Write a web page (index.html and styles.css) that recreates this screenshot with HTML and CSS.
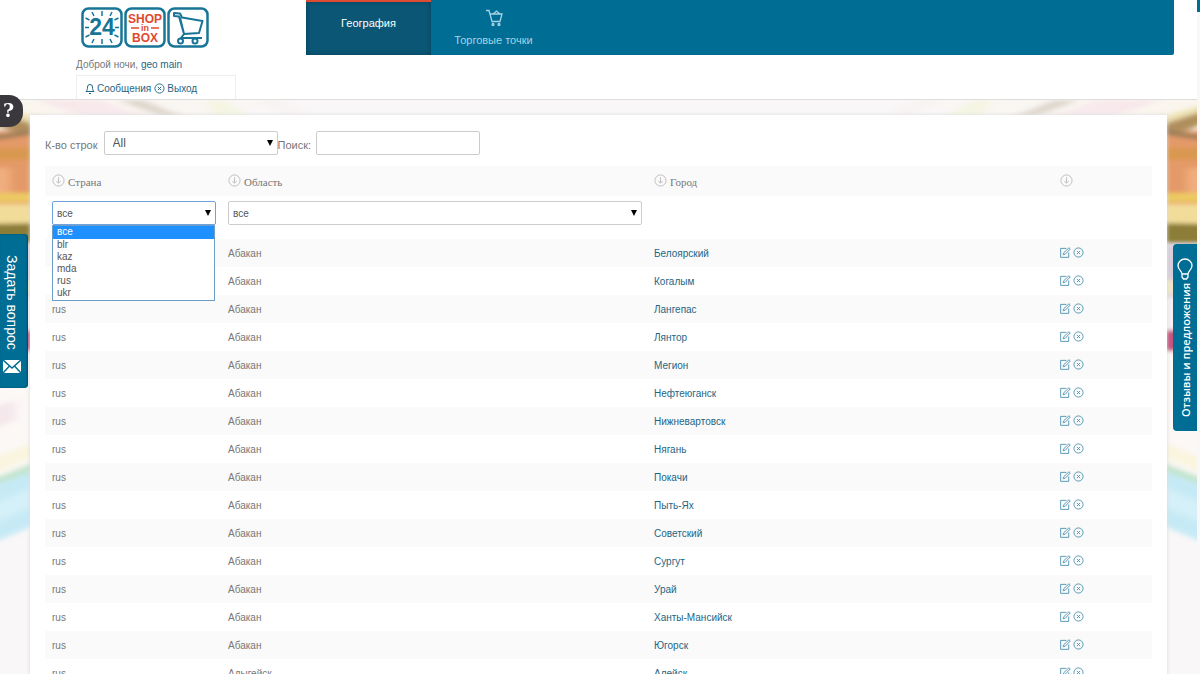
FILE: index.html
```
<!DOCTYPE html>
<html lang="ru">
<head>
<meta charset="utf-8">
<title>География</title>
<link rel="stylesheet" href="styles.css">
</head>
<body>
<svg class="defs" aria-hidden="true">
  <symbol id="down" viewBox="0 0 14 14"><g fill="none" stroke="currentColor"><circle cx="7" cy="7" r="6"/><path d="M7 3.500v6M4.800 7.500L7 10l2.200-2.500"/></g></symbol>
  <symbol id="edit" viewBox="0 0 12 12"><g fill="none" stroke="currentColor"><path d="M7 1.500H.7v9.800h8.800V6"/><path d="M3.500 8.500l.7-2.300L9.800.8l1.400 1.300L5.800 7.800z"/></g></symbol>
  <symbol id="close" viewBox="0 0 12 12"><g fill="none" stroke="currentColor"><circle cx="6" cy="6" r="5"/><path d="M4.200 4.200l3.600 3.600M7.800 4.200L4.200 7.800"/></g></symbol>
  <linearGradient id="haze"><stop offset="0" stop-color="#f9f7f8" stop-opacity="0.300"/><stop offset="1" stop-color="#f9f7f8"/></linearGradient>
  <symbol id="scene" viewBox="0 0 360 575" preserveAspectRatio="none">
    <g filter="url(#soft)">
      <path fill="#fbf4e8" d="M-10-10h330L230 16H-10z"/>
      <path fill="#f7dce2" d="M35 0h65l50 18H90z"/>
      <path fill="#b9a98f" d="M118 0h26l44 18h-24z"/>
      <path fill="#e9f0a8" d="M205 0h20l30 18h-40z"/>
      <path fill="#f5e0dc" d="M255 0h30l35 18h-32z"/>
    </g>
    <path fill="url(#haze)" d="M0 0h360v18H0z"/>
    <g filter="url(#soft)">
      <path fill="#efe2b4" d="M-10 4l50 14v20L-10 24z"/>
      <path fill="#b08e5c" d="M-10 10l50 16v18L-10 22z"/>
      <path fill="#e49a68" d="M-10 30l60 4v74h-60z"/>
      <path fill="#9a7d58" d="M-10 36l60-9v5l-60 9z"/>
      <path fill="#d99850" d="M-10 48h60v12h-60z"/>
      <path fill="#f0ae7e" d="M-10 68h20v26h-20z"/>
      <path fill="#eccb62" d="M-10 93h60v9h-60z"/>
      <path fill="#f2dc9a" d="M-10 104h60v20h-60z"/>
      <path fill="#8c7d38" d="M-10 124l60-1v20h-60z"/>
      <path fill="#d8cdda" d="M-10 145h60v52h-60z"/>
      <path fill="#f2e5c6" d="M-10 180h60v14h-60z"/>
      <path fill="#f7f0f2" d="M-10 197h60v35h-60z"/>
      <path fill="#c4517c" d="M-10 230h60v21h-60z"/>
      <path fill="#fcf8f6" d="M-10 252h60v112l-60 22z"/>
      <path fill="#f4e8ec" d="M-10 308l26-8v20l-26 10z"/>
      <path fill="#f9f5de" d="M-10 360l60-24v14l-60 25z"/>
      <path fill="#c2e4cd" d="M-10 380l60-24v10l-60 24z"/>
      <path fill="#c6eaf5" d="M-10 387l60-22v54l-60 25z"/>
      <path fill="#d4f0f8" d="M-10 405l60-25v20l-60 25z"/>
    </g>
  </symbol>
  <filter id="soft" x="-10%" y="-10%" width="120%" height="120%"><feGaussianBlur stdDeviation="4 2"/></filter>
</svg>

<header class="header">
  <div class="brand">
    <svg class="logo" width="128" height="42" viewBox="0 0 128 42" role="img" aria-label="24 Shop in Box">
      <g fill="#fff" stroke="#187597" stroke-width="2.500"><rect x="1.500" y="1.500" width="39" height="38" rx="6"/><rect x="44.500" y="1.500" width="39" height="38" rx="6"/><rect x="87.500" y="1.500" width="39" height="38" rx="6"/></g>
      <path stroke="#187597" stroke-width="1.500" d="M21 4v5M21 32v5M4 20.500h4M34 20.500h4M11 5l2 4M31 5l-2 4M11 36l2-4M31 36l-2-4M4.500 11l4 2M37.500 11l-4 2M4.500 30l4-2M37.500 30l-4-2"/>
      <text class="logo-num" x="21" y="28" text-anchor="middle">24</text>
      <g class="logo-word" text-anchor="middle"><text x="64" y="16">SHOP</text><text x="64" y="35">BOX</text><text class="logo-in" x="64" y="24">in</text></g>
      <path stroke="#e0492f" stroke-width="1.500" d="M50 21h8M70 21h8"/>
      <g fill="none" stroke="#187597" stroke-width="2" stroke-linejoin="round"><path d="M98 9.500l-5-.5v-3l6 .5 2 4 20.500 3.500L118 26l-15 1zM99 10.500l4 16.500-3 4h21"/><circle cx="99.500" cy="34" r="2.500"/><circle cx="114" cy="34" r="2.500"/></g>
    </svg>
    <p class="greeting">Доброй ночи, <a href="#">geo main</a></p>
    <div class="userbar">
      <a href="#"><svg width="10" height="12" viewBox="0 0 10 12" fill="none" stroke="currentColor"><path d="M1 8.500c1-1 1.500-2 1.500-4.500a2.500 2.500 0 015 0C7.500 6.500 8 7.500 9 8.500zM4 10.500h2"/></svg>Сообщения</a>
      <a href="#"><svg width="11" height="11"><use href="#close"/></svg>Выход</a>
    </div>
  </div>
  <nav class="nav">
    <a class="nav-item active" href="#">География</a>
    <a class="nav-item" href="#"><svg width="18" height="18" viewBox="0 0 18 18" fill="none" stroke="currentColor" stroke-width="1.300"><path d="M1 1.500h3l3 11h8l2-7.500H5M8 5l3.500-3L15 5"/><circle cx="8" cy="15.500" r="1"/><circle cx="14" cy="15.500" r="1"/></svg>Торговые точки</a>
  </nav>
</header>

<main class="main">
  <svg class="scene" aria-hidden="true"><use href="#scene" width="360" height="575"/></svg>
  <svg class="scene flipped" aria-hidden="true"><use href="#scene" width="360" height="575"/></svg>
  <section class="card">
    <form class="controls">
      <label for="count">К-во строк</label>
      <span class="select count"><select id="count"><option>All</option></select></span>
      <label for="search">Поиск:</label>
      <input class="search" id="search" type="text">
    </form>
    <table class="grid">
      <colgroup><col class="c-country"><col class="c-region"><col class="c-city"><col class="c-tools"></colgroup>
      <thead>
        <tr class="titles"><th><svg><use href="#down"/></svg>Страна</th><th><svg><use href="#down"/></svg>Область</th><th><svg><use href="#down"/></svg>Город</th><th><svg><use href="#down"/></svg></th></tr>
        <tr class="filters">
          <td><div class="select open"><select aria-label="Страна"><option>все</option><option>blr</option><option>kaz</option><option>mda</option><option>rus</option><option>ukr</option></select>
            <ul class="menu"><li class="chosen">все</li><li>blr</li><li>kaz</li><li>mda</li><li>rus</li><li>ukr</li></ul></div></td>
          <td><div class="select"><select aria-label="Область"><option>все</option></select></div></td><td></td><td></td>
        </tr>
      </thead>
      <tbody id="rows"></tbody>
    </table>
  </section>
</main>

<button class="help" aria-label="Помощь">?</button>
<button class="tab ask"><span>Задать вопрос</span><svg width="18" height="13" viewBox="0 0 18 13"><path fill="#fff" d="M0 0h18v13H0z"/><path d="M0 0l9 8 9-8M0 13l6.500-7M18 13l-6.500-7" fill="none" stroke="#006d94" stroke-width="1.500"/></svg></button>
<button class="tab feedback"><svg width="16" height="22" viewBox="0 0 16 22" fill="none" stroke="#fff" stroke-width="1.300"><path d="M5 16c0-3-4-4-4-8.500a7 6.500 0 0114 0C15 12 11 13 11 16zM5 16v3l1.500 2h3l1.500-2v-3"/></svg><span>Отзывы и предложения</span></button>
<div class="scrollbar"></div>
<script src="rows.js"></script>
</body>
</html>
```
FILE: rows.js
```
const cities = ["Белоярский", "Когалым", "Лангепас", "Лянтор", "Мегион", "Нефтеюганск", "Нижневартовск", "Нягань", "Покачи", "Пыть-Ях", "Советский", "Сургут", "Урай", "Ханты-Мансийск", "Югорск"];
const rows = cities.map(city => ["rus", "Абакан", city]);
rows.push(["rus", "Адыгейск", "Алейск"]);
document.getElementById("rows").innerHTML = rows.map(([country, region, city]) =>
  `<tr><td>${country}</td><td>${region}</td><td><a href="#">${city}</a></td><td class="tools"><a href="#" aria-label="Изменить"><svg><use href="#edit"/></svg></a><a href="#" aria-label="Удалить"><svg><use href="#close"/></svg></a></td></tr>`
).join("");
```
FILE: styles.css
```
* { box-sizing: border-box; }
html { height: 100%; overflow: hidden; }
body {
  margin: 0;
  padding-right: 3px;
  height: 100%;
  overflow: hidden;
  background: #fff;
  color: #777;
  font: 10px "Liberation Sans", Arial, sans-serif;
}
a { color: #1f6584; text-decoration: none; }
button { border: 0; padding: 0; color: #fff; font-family: "Liberation Sans", Arial, sans-serif; }
.defs { position: absolute; width: 0; height: 0; }

.header { display: flex; align-items: flex-start; border-bottom: 1px solid #ddd; }
.brand { width: 306px; padding: 7px 0 0 76px; }
.logo { display: block; margin-left: 5px; }
.logo-num { fill: #187597; font: bold 23px "Liberation Sans", Arial, sans-serif; }
.logo-word { fill: #e0492f; font: bold 12px "Liberation Sans", Arial, sans-serif; }
.logo-in { font-size: 9px; }
.greeting { margin: 10px 0 4px; line-height: 12px; }
.userbar {
  display: flex;
  gap: 3px;
  width: 160px;
  height: 24px;
  padding: 2px 8px 0;
  border: 1px solid #eee;
  border-bottom: 0;
}
.userbar a { display: flex; align-items: center; gap: 2px; }

.nav { flex: 1; display: flex; height: 55px; margin-right: 23px; background: #006d94; border-radius: 0 0 2px 2px; }
.nav-item {
  display: flex;
  flex-direction: column;
  align-items: center;
  width: 125px;
  padding-top: 9px;
  color: #a6d3e4;
  font-size: 11px;
  line-height: 26px;
}
.nav-item.active {
  padding-top: 8px;
  border-top: 2px solid #dd4b32;
  background: #0a5674;
  box-shadow: inset 0 0 4px #06405a;
  color: #fff;
}

.main { position: relative; padding: 15px 30px 0; background: #f9f7f8; }
.scene { position: absolute; top: 0; left: 0; width: 360px; height: 575px; }
.scene.flipped { left: auto; right: 0; transform: scaleX(-1); }
.card { position: relative; padding: 16px 15px 0; background: #fff; box-shadow: 0 0 4px #ddd; }

.controls { display: flex; align-items: flex-start; height: 35px; font-size: 11px; }
.controls label { padding-top: 8px; line-height: 13px; }
.select { position: relative; display: block; }
.select::after {
  content: "";
  position: absolute;
  right: 5px;
  top: 9px;
  border: 3px solid transparent;
  border-top: 6px solid #000;
  border-bottom: 0;
}
select, .search {
  appearance: none;
  width: 100%;
  height: 24px;
  margin: 0;
  padding: 0 4px;
  border: 1px solid #ccc;
  border-radius: 2px;
  background: #fff;
  color: #555;
  font: 10px "Liberation Sans", Arial, sans-serif;
}
.count { width: 174px; margin-left: 6px; }
.count select { padding-left: 8px; font-size: 12px; }
.search { width: 164px; margin-left: 5px; }

.grid { width: 100%; border-collapse: collapse; table-layout: fixed; }
.c-country { width: 176px; }
.c-region { width: 426px; }
.c-tools { width: 99px; }
.grid td, .grid th { padding: 0 5px 0 7px; text-align: left; }
.titles { height: 30px; background: #fafafa; }
.titles th { font: 11px "Liberation Serif", "Times New Roman", serif; }
.titles svg { width: 13px; height: 13px; margin-right: 3px; vertical-align: -1px; color: #bbb; }
.filters { height: 43px; }
.filters td { padding-top: 5px; vertical-align: top; }
.open select { border-color: #6fa3dd; }
.menu {
  position: absolute;
  z-index: 1;
  top: 24px;
  left: 0;
  right: 1px;
  margin: 0;
  padding: 0 0 1px;
  border: 1px solid #6c9cc8;
  background: #fff;
  color: #555;
  list-style: none;
}
.menu li { height: 12px; padding-left: 4px; line-height: 12px; }
.menu .chosen { height: 13px; background: #1e90ff; color: #fff; }
.grid tbody tr { height: 28px; }
.grid tbody tr:nth-child(odd) { background: #fafafa; }
.tools a { display: inline-block; margin-right: 2px; color: #4c93b0; }
.tools svg { display: block; width: 11px; height: 11px; }

.help {
  position: fixed;
  left: 0;
  top: 95px;
  width: 23px;
  height: 32px;
  padding: 0 6px 3px 0;
  border-radius: 0 14px 14px 0;
  background: #3b383d;
  font: bold 19px "DejaVu Serif", serif;
}
.tab { position: fixed; display: flex; align-items: center; justify-content: center; writing-mode: vertical-rl; background: #006d94; }
.ask { left: 0; top: 234px; width: 28px; height: 154px; padding: 6px 4px 0 0; gap: 10px; border-radius: 0 4px 4px 0; box-shadow: inset -1px 0 2px #044b68; font-size: 14px; }
.feedback { right: 3px; top: 244px; width: 24px; height: 187px; gap: 3px; border-radius: 4px 0 0 4px; font: 600 11px "Open Sans", sans-serif; }
.feedback span { transform: rotate(180deg); }
.scrollbar { position: fixed; right: 0; top: 0; width: 3px; height: 100%; background: linear-gradient(#006d94 12px, #f8f8f8 12px); }
```
